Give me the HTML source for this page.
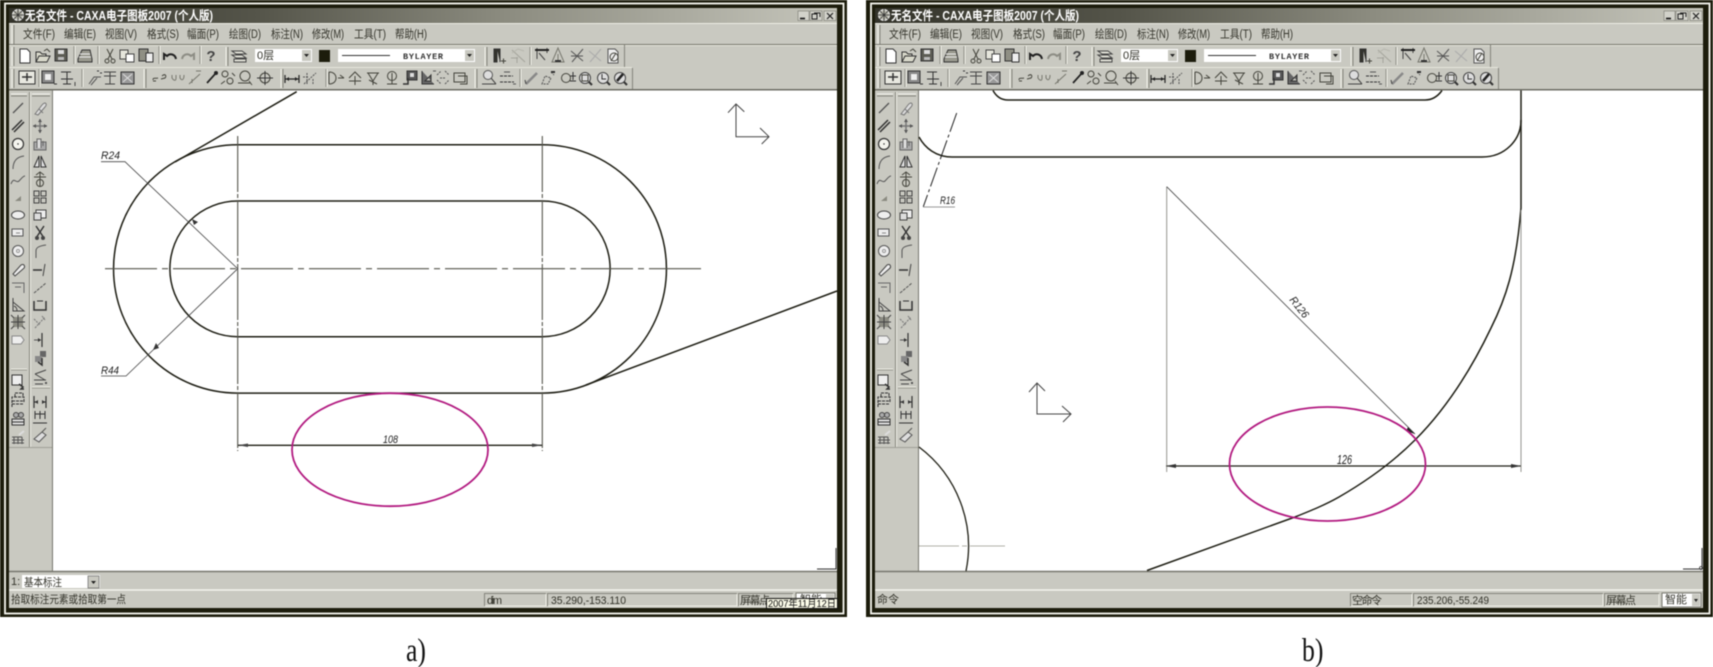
<!DOCTYPE html>
<html><head><meta charset="utf-8"><style>
html,body{margin:0;padding:0;background:#fff;width:1713px;height:667px;overflow:hidden}
svg{display:block;filter:blur(.45px)}
.m{font:11.5px "Liberation Sans","Noto Sans CJK SC",sans-serif;fill:#33332a}
.t{font:bold 12.5px "Liberation Sans","Noto Sans CJK SC",sans-serif;fill:#fff}
.s{font:11px "Liberation Sans","Noto Sans CJK SC",sans-serif;fill:#33332a}
.c{font:italic 11px "Liberation Sans",sans-serif;fill:#222}
.cap{font:33px "Liberation Serif",serif;fill:#111}
.i{fill:none;stroke:#44443c;stroke-width:1}
</style></head><body>
<svg width="1713" height="667" viewBox="0 0 1713 667" xmlns="http://www.w3.org/2000/svg">
<defs>
<linearGradient id="tg" x1="0" x2="1" y1="0" y2="0"><stop offset="0" stop-color="#33332a"/><stop offset=".3" stop-color="#55554a"/><stop offset=".6" stop-color="#8c8c80"/><stop offset="1" stop-color="#c6c6bc"/></linearGradient>
<g id="sep"><path d="M0-9V9" stroke="#8e8e86"/><path d="M1-9V9" stroke="#f2f2ea"/></g>
<g id="grip"><path d="M0-9V10" stroke="#f2f2ea" stroke-width="1"/><path d="M2-9V10" stroke="#85857c" stroke-width="1"/></g>
<g id="new"><path d="M-5-7H2L5-4V7H-5Z" fill="#fff" stroke="#333"/></g>
<g id="open"><path d="M-7 6V-4H-3L-1-2H3V0M-7 6L-4 0H7L4 6Z" fill="#d8d8ca" stroke="#333"/><path d="M1-5L4-7L7-4" class="i"/></g>
<g id="save"><rect x="-6" y="-6" width="12" height="12" fill="#5c5c54" stroke="#333"/><rect x="-3" y="-5" width="6" height="4" fill="#ddd"/><rect x="-3" y="2" width="6" height="3" fill="#bbb"/></g>
<g id="print"><path d="M-7 3L-3-6H5L7 3V6H-7Z" fill="#99998e" stroke="#333"/><path d="M-5-2H5M-6 1H6" stroke="#eee"/></g>
<g id="cut"><path d="M-3-7L2 3M3-7L-2 3" class="i"/><circle cx="-3" cy="5" r="2" class="i"/><circle cx="3" cy="5" r="2" class="i"/></g>
<g id="copy"><rect x="-7" y="-6" width="8" height="9" fill="#e6e6dc" stroke="#444"/><rect x="-1" y="-2" width="8" height="8" fill="#fff" stroke="#444"/></g>
<g id="paste"><rect x="-7" y="-6" width="9" height="12" fill="#8f8f84" stroke="#333"/><rect x="0" y="-2" width="7" height="9" fill="#eee" stroke="#333"/></g>
<g id="undo"><path d="M-6 3V-3L-3-1C0-4 5-3 6 2" fill="none" stroke="#222" stroke-width="2"/></g>
<g id="redo"><path d="M6 3V-3L3-1C0-4-5-3-6 2" fill="none" stroke="#8d8d85" stroke-width="2"/></g>
<g id="layer"><path d="M-7-5H3L7-2H-3ZM-7-1H3L7 2H-3ZM-5 3H7V6H-5Z" fill="#deded4" stroke="#444"/></g>
<g id="mag"><path d="M-4-7H-1V6H-4ZM-1-7H2V6" fill="#33332a" stroke="#333"/><path d="M3 5H8M5.500 2.500V7.500" class="i"/></g>
<g id="g1"><path d="M-6-6L7 6M-1 1V7M-7 2H0" stroke="#77776e" fill="none"/><path d="M-6-3L0-7L6-5" stroke="#a0a096" fill="none"/></g>
<g id="g2"><path d="M-7-6H7M-5-8V3M5-8V-3M-3-3L3 4" stroke="#444" fill="none"/><path d="M-7-6H7" stroke="#222" stroke-width="2"/></g>
<g id="g3"><path d="M0-8L-6 6H6ZM0-2V6" stroke="#77776e" fill="none"/><path d="M-3 5H3" stroke="#333" stroke-width="2"/></g>
<g id="g4"><path d="M-6-5L6 5M6-7L-5 6M-6 0H6" stroke="#555" fill="none"/></g>
<g id="g5"><path d="M-6-5L6 5M6-7L-5 6" stroke="#aaa" fill="none"/></g>
<g id="g6"><path d="M-5-7H2L5-4V7H-5Z" fill="#eee" stroke="#555"/><circle cx="1" cy="1" r="4" class="i"/><path d="M-2 5L3-3" class="i"/></g>
<g id="box"><rect x="-8" y="-7" width="16" height="13" fill="#e8e8e0" stroke="#333"/><path d="M-5-1H5M0-5V3" stroke="#333" stroke-width="1.500"/></g>
<g id="b2"><rect x="-6" y="-7" width="12" height="12" fill="#888" stroke="#333"/><rect x="-3" y="-4" width="6" height="6" fill="#eee"/><path d="M6 6H9" stroke="#333"/></g>
<g id="b3"><path d="M-6 1H6M0-6V6M-4 6H4M-6-6H4" stroke="#333" fill="none"/><path d="M8 4V8" stroke="#444"/></g>
<g id="b4"><path d="M-6 6L-1-1H6M-4 7L2 0" stroke="#555" fill="none"/><path d="M2-7H4M5-5H7" stroke="#333"/></g>
<g id="b5"><path d="M-6-6H6M-6-2H6M0-6V6M-5 6H5" stroke="#444" fill="none"/></g>
<g id="b6"><rect x="-6" y="-6" width="13" height="12" fill="#999" stroke="#333"/><path d="M-4-4L5 4M-4 4L5-4" stroke="#ddd"/></g>
<g id="k1"><path d="M-7 2C-7-1-5 1-2 0M2-2C5-5 7-2 5 0L1 1M-7 3H-4" class="i"/></g>
<g id="k2"><path d="M-6-3V0C-4 3-2 3-2 0V-3M2-3V0C4 3 6 2 6-3" stroke="#77776e" fill="none"/></g>
<g id="k3"><path d="M-6 6L5-4M-3 1L-3 5M1-7H6" stroke="#77776e" fill="none"/></g>
<g id="k4"><path d="M-5 5L4-5" stroke="#222" stroke-width="1.700"/><circle cx="4" cy="-5" r="2" fill="#222"/></g>
<g id="k5"><circle cx="-3" cy="-4" r="3" class="i"/><circle cx="2" cy="3" r="3" class="i"/><path d="M-7 6L-3 3M4-5L7-2" class="i"/></g>
<g id="k6"><circle cx="0" cy="-2" r="5" class="i"/><path d="M-7 5H5M4 3L7 7" class="i"/></g>
<g id="k7"><circle cx="0" cy="0" r="5" class="i"/><path d="M-8 0H8M0-7V7" stroke="#333"/></g>
<g id="d1"><path d="M-7-4V4M7-4V4M-7 0H7" stroke="#222" stroke-width="1.200"/><path d="M-6 0L-3-2V2ZM6 0L3-2V2Z" fill="#222"/></g>
<g id="d2"><path d="M-6 6L6-5M-3-5V6M3 1V7M-7-1H-2" stroke="#555" stroke-dasharray="2 1" fill="none"/></g>
<g id="d3"><path d="M-7-6V6M-7-6C-2-6 0-3 0 0S-2 6-7 6M2 0H8M4-3L8 0" class="i"/></g>
<g id="d4"><path d="M-6 0L0-6L6 0M-6 3H6M0-2V7" class="i"/></g>
<g id="d5"><path d="M-6-5L6-5M-5-5L0 3L5-5M0 3V7M-4 2L4 6" class="i"/></g>
<g id="d6"><circle cy="-2" r="4.500" class="i"/><path d="M-5 6H5M0-5V6" class="i"/></g>
<g id="d7"><rect x="-3" y="-7" width="10" height="9" fill="#555" stroke="#333"/><rect x="0" y="-5" width="4" height="4" fill="#ddd"/><path d="M-7 6H-2V0" stroke="#333" stroke-width="1.500" fill="none"/></g>
<g id="d8"><path d="M-6-7V6H6M-3 3L3-3V3Z" fill="#666" stroke="#333"/><path d="M5-7H8" stroke="#555"/></g>
<g id="d9"><path d="M-6-3L-2-7M2-7L6-3M-6 2L-2 6M2 6L6 2M-3 0H3" stroke="#555" stroke-dasharray="2 1" fill="none"/></g>
<g id="d10"><rect x="-6" y="-5" width="11" height="9" class="i"/><path d="M-2-2H7L7 6H0" class="i"/></g>
<g id="e1"><circle cx="-1" cy="-3" r="4.500" fill="#ddd" stroke="#555"/><path d="M2 0L7 6M-7 6H7" stroke="#444" fill="none"/></g>
<g id="e2"><path d="M-7-2H6M-7 4H7" stroke="#333" stroke-dasharray="3 1" fill="none"/><path d="M-3-6H3M6 6H9" stroke="#555"/></g>
<g id="e3"><path d="M-6 6L5-5" stroke="#888" stroke-width="2.500"/><path d="M-6 6L-7 2" stroke="#444"/></g>
<g id="e4"><path d="M-6 6L-3-2L3 0L0 6ZM3-6L6-3" stroke="#555" fill="none" stroke-dasharray="2 1"/><path d="M3-6H7" stroke="#333" stroke-width="2"/></g>
<g id="e5"><circle cx="-2" cy="0" r="4.500" class="i"/><path d="M2-2H8M5-6V2M2 3H8" stroke="#333"/></g>
<g id="e6"><circle r="5.500" fill="#ddd" stroke="#444"/><rect x="-3" y="-3" width="6" height="6" class="i"/><path d="M4 4L7 7" stroke="#333" stroke-width="2"/></g>
<g id="e7"><circle r="5.500" fill="#ddd" stroke="#444"/><path d="M-1-4V1H3" stroke="#333" fill="none"/><path d="M4 4L7 7" stroke="#333" stroke-width="2"/></g>
<g id="e8"><circle r="5.500" fill="#ddd" stroke="#444"/><path d="M-3 3L3-4" stroke="#222" stroke-width="2.500"/><path d="M4 4L7 7" stroke="#333" stroke-width="2"/></g>
<!-- left panel -->
<g id="l1"><path d="M-5 5L5-5" stroke="#555" stroke-width="1.300"/></g>
<g id="l2"><path d="M-6 4L4-6M-4 6L6-4" stroke="#333" stroke-width="1.500"/></g>
<g id="l3"><circle r="5.500" fill="#f4f4ee" stroke="#333" stroke-width="1.200"/><circle r=".7" fill="#222"/></g>
<g id="l4"><path d="M-5 7C-5 0-2-5 6-6" stroke="#555" fill="none"/></g>
<g id="l5"><path d="M-7 4C-4-4-2 4 1 1S5-4 7-4" stroke="#555" fill="none"/></g>
<g id="l6"><path d="M-3 3H3V-2L-3 3" fill="#8a8a80"/></g>
<g id="l7"><ellipse rx="6.500" ry="4" fill="#eee" stroke="#444"/></g>
<g id="l8"><rect x="-6" y="-4" width="11" height="7" fill="#eee" stroke="#555"/><path d="M-2 0H2" stroke="#888"/></g>
<g id="l9"><circle r="5.500" fill="#eee" stroke="#555"/><circle r="1.500" fill="none" stroke="#999"/></g>
<g id="l10"><path d="M-5 4L3-5C6-7 8-3 5-1L-3 6Z" fill="#eee" stroke="#444"/></g>
<g id="l11"><path d="M-6-5H6V5M-3-1H3" stroke="#666" fill="none"/></g>
<g id="l12"><path d="M-5-7V6H6L-5-3M-1 6C-1 3-2 2-4 1" stroke="#444" fill="none"/></g>
<g id="l13"><rect x="-5" y="-5" width="10" height="10" fill="#8c8c82"/><path d="M-7-7L-4-4M7-7L4-4M-7 7L-4 4M7 7L4 4M-7 0H7M0-7V7" stroke="#444"/></g>
<g id="l14"><path d="M-6-4H3L6 0L3 4H-6Z" fill="#eee" stroke="#888"/></g>
<g id="l16"><rect x="-6" y="-7" width="10" height="10" fill="#eee" stroke="#333"/><path d="M1 2L5 5L3 7L6 7" stroke="#333" stroke-width="1.500" fill="none"/></g>
<g id="l17"><path d="M-6 7V-3H6V3M-6 1H6M-6 4H6M-3-3V-7H5V-3" stroke="#333" stroke-dasharray="3 1" fill="none"/></g>
<g id="l18"><path d="M-6 7V1H6V7ZM-6 4H6" stroke="#333" fill="#ddd"/><circle cx="-2" cy="-3" r="2.500" fill="#aaa" stroke="#444"/><circle cx="3" cy="-3" r="2.500" fill="#aaa" stroke="#444"/></g>
<g id="l19"><path d="M-6 0H4M-6 3H6M-6 6H6M-4 0V7M0 0V7M4 0V7" stroke="#555"/><path d="M1-2L6-6" stroke="#ddd" stroke-width="2"/></g>
<g id="r1"><path d="M-5 6L2-3C5-7 8-4 5-1L-2 7ZM-1 1L3 5" fill="#ddd" stroke="#777"/></g>
<g id="r2"><path d="M-7 0H7M0-7V7" stroke="#777" stroke-width="1.500"/><path d="M-7 0L-4-2V2ZM7 0L4-2V2ZM0-7L-2-4H2ZM0 7L-2 4H2Z" fill="#555"/></g>
<g id="r3"><rect x="-6" y="-2" width="12" height="8" fill="#aaa" stroke="#666"/><path d="M-3 4V-5H1V4M3 2V-3" stroke="#666" fill="#ddd"/></g>
<g id="r4"><path d="M-1-6L-6 5H-1ZM1-6L6 5H1Z" stroke="#333" fill="#ddd"/></g>
<g id="r5"><circle cx="0" cy="3" r="3.500" class="i"/><path d="M0-8V6M-6-3H6M-4-5L0-8L4-5" class="i"/></g>
<g id="r6"><path d="M-6-7H-1V-2H-6ZM1-7H6V-2H1ZM-6 0H-1V5H-6ZM1 0H6V5H1Z" fill="none" stroke="#444"/></g>
<g id="r7"><rect x="-4" y="-5" width="10" height="8" fill="#eee" stroke="#444"/><rect x="-6" y="-2" width="7" height="7" fill="#ddd" stroke="#444"/></g>
<g id="r8"><path d="M-4-7L4 5M4-7L-4 5" stroke="#333" stroke-width="1.400"/><circle cx="-3" cy="5" r="2" fill="#444"/><circle cx="3" cy="5" r="2" fill="#444"/></g>
<g id="r9"><path d="M-4 7V0C-4-3-2-5 6-6" stroke="#555" fill="none"/></g>
<g id="r10"><path d="M-7 0H2" stroke="#333" stroke-width="1.500"/><path d="M5-6L3 6" stroke="#444" fill="none"/></g>
<g id="r11"><path d="M-6 5L6-5" stroke="#555" stroke-dasharray="3 1"/></g>
<g id="r12"><path d="M-6-4V5H6V-4" stroke="#333" stroke-width="1.500" fill="none"/><path d="M-3-4H3" stroke="#333"/></g>
<g id="r13"><path d="M-5 6L5-5M-6-3L0 3M2-6L5-2" stroke="#777" stroke-dasharray="2 1" fill="none"/></g>
<g id="r14"><path d="M2-7V7" stroke="#333" stroke-width="1.200"/><path d="M-6 0H1" stroke="#555"/><path d="M1 0L-2-2V2Z" fill="#333"/></g>
<g id="r15"><rect x="0" y="-7" width="6" height="6" fill="#666"/><rect x="-5" y="-2" width="7" height="6" fill="#888"/><path d="M2 0V7L-2 4" stroke="#333" stroke-width="1.500" fill="none"/></g>
<g id="r16"><path d="M-5-3L6-7M-6 3H6M-5-3L5 3M-5 7H3" stroke="#444" fill="none"/><path d="M5 5H7V7H5Z" fill="#555"/></g>
<g id="r17"><path d="M-6-6V6M6-6V6M-6 0H-2M2 0H6" stroke="#333" stroke-width="1.200"/><path d="M-5 0L-2-2V2ZM5 0L2-2V2Z" fill="#333"/></g>
<g id="r18"><path d="M-5-6V2M5-6V2M0-6V2M-5-3H5M-7 6H7" stroke="#333" fill="none"/></g>
<g id="r19"><path d="M-6 4L2-3L6 0L-1 7ZM2-3L6-7" stroke="#555" fill="#ddd"/></g>
<!-- window chrome -->
<g id="win">
<rect x="0" y="0" width="847" height="617" fill="#1c1c0c"/>
<rect x="5" y="3.500" width="838.500" height="610" fill="none" stroke="#f8f8f2" stroke-width="1.800"/>
<rect x="9" y="8" width="828" height="600" fill="#c9c9c1"/>
<rect x="9" y="8" width="828" height="15" fill="url(#tg)"/>
<rect x="9" y="23" width="828" height="1" fill="#eeeee6"/>
<rect x="9" y="44" width="828" height="1" fill="#77776e"/>
<rect x="9" y="45" width="828" height="1" fill="#e6e6dc"/>
<rect x="9" y="67" width="623" height="1" fill="#e6e6dc"/>
<rect x="9" y="89" width="828" height="1.500" fill="#6d6d64"/>
<path d="M624.500 45V67" stroke="#85857c"/><path d="M632.500 68V89" stroke="#85857c"/>
<!-- title icon -->
<circle cx="18" cy="15" r="5.500" fill="#bcbcb0" stroke="#eee"/><path d="M13 10L23 20M23 10L13 20M18 9V21M12 15H24" stroke="#333" stroke-width=".8"/>
<!-- window buttons -->
<g fill="#d2d2ca" stroke="#77776e" stroke-width=".6"><rect x="798" y="11" width="11" height="9.500"/><rect x="810" y="11" width="12" height="9.500"/><rect x="824" y="11" width="12" height="9.500"/></g>
<path d="M800 18.500H805" stroke="#111" stroke-width="1.600"/><path d="M812 14H817V19H812ZM814 13H820V17" fill="none" stroke="#222"/><path d="M827 13L833 19M833 13L827 19" stroke="#222" stroke-width="1.200"/>
<!-- grips -->
<use href="#grip" x="12" y="34"/><use href="#grip" x="12" y="56"/><use href="#grip" x="12" y="78"/>
<!-- toolbar 1 -->
<use href="#new" x="25" y="56"/><use href="#open" x="43" y="56"/><use href="#save" x="61" y="55"/><use href="#sep" x="74" y="55"/>
<use href="#print" x="85" y="56"/><use href="#sep" x="98" y="55"/><use href="#cut" x="110" y="56"/><use href="#copy" x="127" y="56"/><use href="#paste" x="146" y="55"/><use href="#sep" x="159" y="55"/>
<use href="#undo" x="170" y="57"/><use href="#redo" x="188" y="57"/><use href="#sep" x="200" y="55"/><use href="#grip" x="226" y="56"/>
<use href="#layer" x="239" y="56"/>
<rect x="255" y="49" width="57" height="13" fill="#fff"/><rect x="302" y="50" width="9" height="11" fill="#c9c9c1"/><path d="M304 54H309L306.500 57Z" fill="#222"/>
<rect x="319" y="50" width="11" height="12" fill="#1c1c0c"/>
<rect x="338" y="49" width="137" height="13" fill="#fff"/><rect x="465" y="50" width="9" height="11" fill="#c9c9c1"/><path d="M467 54H472L469.500 57Z" fill="#222"/><path d="M342 55.500H390" stroke="#333"/>
<use href="#grip" x="485" y="56"/><use href="#mag" x="498" y="56"/>
<g opacity=".45"><use href="#g1" x="518" y="56"/></g><use href="#sep" x="530" y="56"/>
<use href="#g2" x="542" y="56"/><use href="#g3" x="558" y="56"/><use href="#g4" x="577" y="56"/><use href="#g5" x="595" y="56"/><use href="#g6" x="613" y="56"/>
<!-- toolbar 2 -->
<use href="#box" x="27" y="78"/><use href="#sep" x="39" y="78"/><use href="#b2" x="48" y="78"/><use href="#b3" x="67" y="78"/><use href="#sep" x="82" y="78"/><use href="#b4" x="95" y="78"/><use href="#b5" x="110" y="78"/><use href="#b6" x="127" y="78"/><use href="#grip" x="144" y="78"/>
<use href="#k1" x="160" y="78"/><use href="#k2" x="178" y="78"/><use href="#k3" x="195" y="78"/><use href="#k4" x="212" y="78"/><use href="#k5" x="228" y="78"/><use href="#k6" x="245" y="78"/><use href="#k7" x="265" y="78"/><use href="#grip" x="281" y="78"/>
<use href="#d1" x="292" y="79"/><use href="#d2" x="310" y="78"/><use href="#sep" x="326" y="78"/>
<use href="#d3" x="336" y="78"/><use href="#d4" x="355" y="78"/><use href="#d5" x="373" y="78"/><use href="#d6" x="392" y="78"/><use href="#d7" x="410" y="78"/><use href="#d8" x="428" y="78"/><use href="#d9" x="443" y="78"/><use href="#d10" x="460" y="78"/><use href="#grip" x="475" y="78"/>
<use href="#e1" x="489" y="78"/><use href="#e2" x="507" y="78"/><use href="#sep" x="520" y="78"/><use href="#e3" x="532" y="78"/><use href="#e4" x="548" y="78"/><use href="#e5" x="568" y="78"/><use href="#e6" x="585" y="78"/><use href="#e7" x="603" y="78"/><use href="#e8" x="620" y="78"/>
<!-- left panel -->
<path d="M29.500 92V447" stroke="#85857c"/><path d="M30.500 92V447" stroke="#f0f0e8"/><path d="M9 447.500H52" stroke="#a0a098"/>
<path d="M11 94H27M32 94H50" stroke="#f4f4ee"/><path d="M11 96H27M32 96H50" stroke="#85857c"/>
<path d="M11 369H27M32 387H50" stroke="#eeeee6"/><path d="M11 370H27M32 388H50" stroke="#99998f"/>
<path d="M52.500 90V571" stroke="#77776e"/>
<use href="#l1" x="18" y="108"/><use href="#l2" x="18" y="126"/><use href="#l3" x="18" y="144"/><use href="#l4" x="18" y="162"/><use href="#l5" x="18" y="180"/><use href="#l6" x="18" y="198"/><use href="#l7" x="18" y="215"/><use href="#l8" x="18" y="233"/><use href="#l9" x="18" y="251"/><use href="#l10" x="18" y="270"/><use href="#l11" x="18" y="288"/><use href="#l12" x="18" y="305"/><use href="#l13" x="18" y="322"/><use href="#l14" x="18" y="340"/>
<use href="#l16" x="18" y="382"/><use href="#l17" x="18" y="400"/><use href="#l18" x="18" y="418"/><use href="#l19" x="18" y="437"/>
<use href="#r1" x="40" y="108"/><use href="#r2" x="40" y="126"/><use href="#r3" x="40" y="144"/><use href="#r4" x="40" y="162"/><use href="#r5" x="40" y="180"/><use href="#r6" x="40" y="198"/><use href="#r7" x="40" y="215"/><use href="#r8" x="40" y="233"/><use href="#r9" x="40" y="251"/><use href="#r10" x="40" y="270"/><use href="#r11" x="40" y="288"/><use href="#r12" x="40" y="305"/><use href="#r13" x="40" y="322"/><use href="#r14" x="40" y="340"/><use href="#r15" x="40" y="358"/><use href="#r16" x="40" y="377"/><use href="#r17" x="40" y="402"/><use href="#r18" x="40" y="417"/><use href="#r19" x="40" y="435"/>
<!-- canvas -->
<rect x="53" y="90.500" width="784" height="481" fill="#fff"/>
<path d="M9 571.500H837" stroke="#77776e" stroke-width="1.500"/><path d="M9 590H837" stroke="#f4f4ee" stroke-width="1.500"/>
<!-- status fields -->
<g fill="none" stroke="#85857c"><path d="M484.500 606V593.500H546"/><path d="M547.500 606V593.500H737"/><path d="M738.500 606V593.500H793"/></g>
<g fill="none" stroke="#f0f0e8"><path d="M546 594V606H485"/><path d="M737 594V606H548"/><path d="M793 594V606H739"/></g>
<rect x="796" y="593" width="39" height="14" fill="#fff" stroke="#77776e"/><rect x="826" y="594" width="8" height="12" fill="#c9c9c1"/><path d="M828 599H832L830 602Z" fill="#222"/>
</g>
</defs>

<use href="#win"/>
<use href="#win" transform="translate(866,0)"/>

<!-- Window A texts -->
<text x="25" y="20" class="t" textLength="188" lengthAdjust="spacingAndGlyphs">无名文件 - CAXA电子图板2007 (个人版)</text>
<g class="m"><text x="23" y="38" textLength="32" lengthAdjust="spacingAndGlyphs">文件(F)</text><text x="64" y="38" textLength="32" lengthAdjust="spacingAndGlyphs">编辑(E)</text><text x="105" y="38" textLength="32" lengthAdjust="spacingAndGlyphs">视图(V)</text><text x="147" y="38" textLength="32" lengthAdjust="spacingAndGlyphs">格式(S)</text><text x="187" y="38" textLength="32" lengthAdjust="spacingAndGlyphs">幅面(P)</text><text x="229" y="38" textLength="32" lengthAdjust="spacingAndGlyphs">绘图(D)</text><text x="271" y="38" textLength="32" lengthAdjust="spacingAndGlyphs">标注(N)</text><text x="312" y="38" textLength="32" lengthAdjust="spacingAndGlyphs">修改(M)</text><text x="354" y="38" textLength="32" lengthAdjust="spacingAndGlyphs">工具(T)</text><text x="395" y="38" textLength="32" lengthAdjust="spacingAndGlyphs">帮助(H)</text></g>
<text x="211" y="61" text-anchor="middle" style="font:bold 15px 'Liberation Sans',sans-serif;fill:#444">?</text>
<text x="257" y="59" class="s">0层</text>
<text x="403" y="59" style="font:bold 8.500px 'Liberation Mono',monospace;fill:#333" textLength="40">BYLAYER</text>
<text x="11" y="585" class="s">1:</text>
<rect x="22" y="575" width="78" height="13" fill="#fff"/><rect x="88" y="576" width="11" height="12" fill="#c9c9c1" stroke="#555" stroke-width=".6"/><path d="M91 581H96L93.500 584Z" fill="#222"/>
<text x="24" y="586" class="s" textLength="38" lengthAdjust="spacingAndGlyphs">基本标注</text>
<text x="11" y="603" class="s" textLength="115" lengthAdjust="spacingAndGlyphs">拾取标注元素或拾取第一点</text>
<text x="487" y="604" class="s" textLength="15">dim</text>
<text x="551" y="604" class="s" textLength="75" lengthAdjust="spacingAndGlyphs">35.290,-153.110</text>
<text x="740" y="604" class="s" textLength="30">屏幕点</text>
<text x="800" y="603" class="s">智能</text>
<rect x="766.500" y="598.500" width="71" height="10" fill="#fbfbe8" stroke="#111"/>
<text x="768" y="607" class="s" style="font-size:10px;fill:#111" textLength="68" lengthAdjust="spacingAndGlyphs">2007年11月12日</text>

<!-- Window B texts -->
<text x="891" y="20" class="t" textLength="188" lengthAdjust="spacingAndGlyphs">无名文件 - CAXA电子图板2007 (个人版)</text>
<g class="m"><text x="889" y="38" textLength="32" lengthAdjust="spacingAndGlyphs">文件(F)</text><text x="930" y="38" textLength="32" lengthAdjust="spacingAndGlyphs">编辑(E)</text><text x="971" y="38" textLength="32" lengthAdjust="spacingAndGlyphs">视图(V)</text><text x="1013" y="38" textLength="32" lengthAdjust="spacingAndGlyphs">格式(S)</text><text x="1053" y="38" textLength="32" lengthAdjust="spacingAndGlyphs">幅面(P)</text><text x="1095" y="38" textLength="32" lengthAdjust="spacingAndGlyphs">绘图(D)</text><text x="1137" y="38" textLength="32" lengthAdjust="spacingAndGlyphs">标注(N)</text><text x="1178" y="38" textLength="32" lengthAdjust="spacingAndGlyphs">修改(M)</text><text x="1220" y="38" textLength="32" lengthAdjust="spacingAndGlyphs">工具(T)</text><text x="1261" y="38" textLength="32" lengthAdjust="spacingAndGlyphs">帮助(H)</text></g>
<text x="1077" y="61" text-anchor="middle" style="font:bold 15px 'Liberation Sans',sans-serif;fill:#444">?</text>
<text x="1123" y="59" class="s">0层</text>
<text x="1269" y="59" style="font:bold 8.500px 'Liberation Mono',monospace;fill:#333" textLength="40">BYLAYER</text>
<text x="877" y="603" class="s">命令</text>
<text x="1352" y="604" class="s" textLength="30">空命令</text>
<text x="1417" y="604" class="s" textLength="72" lengthAdjust="spacingAndGlyphs">235.206,-55.249</text>
<text x="1606" y="604" class="s" textLength="30">屏幕点</text>
<text x="1665" y="603" class="s">智能</text>

<!-- Drawing A -->
<g fill="none" stroke="#1e1e14" stroke-width="1.500">
<path d="M237.700 144.700H542.300A124.200 124.200 0 0 1 542.300 393.100H237.700A124.200 124.200 0 0 1 237.700 144.700Z"/>
<path d="M237.700 201H542.300A67.800 67.800 0 0 1 542.300 336.700H237.700A67.800 67.800 0 0 1 237.700 201Z"/>
<path d="M296.700 91.700L175 162"/>
<path d="M837 291L586 385"/>
<path d="M237.700 445.300H542.300" stroke-width="1.300"/>
</g>
<g fill="none" stroke="#55554c" stroke-width="1.100">
<path d="M105 268.700H705" stroke-dasharray="52 5 6 5"/>
<path d="M237.700 136V451" stroke-dasharray="56 2 4 2"/>
<path d="M542.300 136V451" stroke-dasharray="56 2 4 2"/>
</g>
<g fill="none" stroke="#444" stroke-width=".8">
<path d="M101 161.700H125L237.700 268.700L126 376H101"/>
</g>
<path d="M192 219L198 222L194 225ZM153 350L156 343L159 348Z" fill="#333"/>
<path d="M238 445.300L248 443.500V447ZM542 445.300L532 443.500V447Z" fill="#444"/>
<text x="101" y="159" class="c" textLength="19" lengthAdjust="spacingAndGlyphs">R24</text>
<text x="101" y="374" class="c" textLength="18" lengthAdjust="spacingAndGlyphs">R44</text>
<text x="383" y="443" class="c" textLength="15" lengthAdjust="spacingAndGlyphs">108</text>
<ellipse cx="390" cy="449.700" rx="98" ry="56.500" fill="none" stroke="#b21a80" stroke-width="1.800"/>
<!-- UCS A -->
<path d="M736 104V136.700H769M728 112.700L736 104L744.300 111.700M760 128L769 136.700L761.700 144" fill="none" stroke="#444" stroke-width="1"/>
<path d="M836 548V569H817" fill="none" stroke="#333" stroke-width="1"/>

<!-- Drawing B -->
<g fill="none" stroke="#1e1e14" stroke-width="1.500">
<path d="M993 90.500C996 96 1001 100 1008 100H1425C1432 100 1438 96 1442 90.500"/>
<path d="M919 137C925 148 936 157 952 157H1482C1505 157 1521 140 1521 120"/>
<path d="M1521 90.500V208"/>
<path d="M1521 208C1516 270 1505 300 1491 328C1470 372 1445 410 1415 440C1392 463 1365 482 1339 497C1325 505 1310 511 1295 517L1147 570.500"/>
<path d="M919 447A124 124 0 0 1 966 571" stroke-width="1.300"/>
<path d="M1166 466H1521" stroke-width="1.300"/>
</g>
<g fill="none" stroke="#8a8a84" stroke-width=".9">
<path d="M1166.700 186.700V472"/><path d="M1521 210V472"/>
</g>
<path d="M1166.700 186.700L1415 434" fill="none" stroke="#444" stroke-width=".8"/>
<path d="M1408 427L1415 434L1406 431Z" fill="#222"/>
<path d="M1166 466L1176 464V468ZM1521 466L1511 464V468Z" fill="#333"/>
<path d="M919 546H1005" fill="none" stroke="#b0b0a8" stroke-dasharray="40 3 5 3"/>
<path d="M956.700 113L923.300 206.700" fill="none" stroke="#222" stroke-dasharray="20 3 3 3" stroke-width="1"/>
<path d="M923 207H955" fill="none" stroke="#777" stroke-width=".8"/>
<text x="940" y="204" class="c" textLength="15" lengthAdjust="spacingAndGlyphs">R16</text>
<text transform="translate(1289,300) rotate(52)" class="c" textLength="24" lengthAdjust="spacingAndGlyphs">R126</text>
<text x="1337" y="464" class="c" style="font-size:13px" textLength="15" lengthAdjust="spacingAndGlyphs">126</text>
<ellipse cx="1327.500" cy="464" rx="98" ry="57" fill="none" stroke="#b21a80" stroke-width="1.800"/>
<!-- UCS B -->
<path d="M1037 383V414H1071M1029 392L1037 383L1045 391M1062 406L1071 414L1063 422" fill="none" stroke="#444" stroke-width="1"/>
<path d="M1702 548V569H1683" fill="none" stroke="#333" stroke-width="1"/>
<circle cx="1701" cy="568" r="1.500" fill="none" stroke="#333" stroke-width=".8"/>

<!-- captions -->
<text transform="translate(406,661) scale(.78,1)" class="cap">a)</text>
<text transform="translate(1302,661) scale(.78,1)" class="cap">b)</text>
</svg>
</body></html>
